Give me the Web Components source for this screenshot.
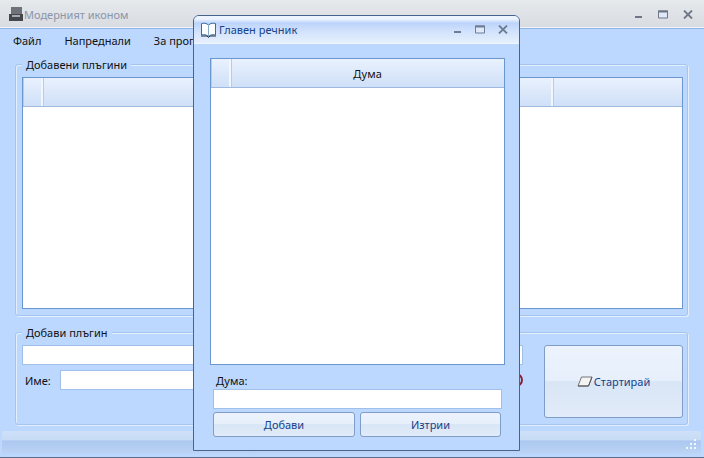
<!DOCTYPE html>
<html><head><meta charset="utf-8"><style>
html,body{margin:0;padding:0;width:704px;height:458px;overflow:hidden;background:#bcd8fe}
body{font:11px "Liberation Sans",Tahoma,sans-serif;color:#111}
</style></head><body>
<main-window></main-window>
<script>
const FONT='"Noto Sans","Liberation Sans",sans-serif';
function def(name,html,init){customElements.define(name,class extends HTMLElement{constructor(){super();this.attachShadow({mode:'open'}).innerHTML=html;}connectedCallback(){if(init)init(this)}})}
const min=c=>`<svg width="9" height="9" viewBox="0 0 9 9"><rect x="1" y="6" width="7" height="2" fill="${c}"/></svg>`;
const max=c=>`<svg width="10" height="9" viewBox="0 0 10 9"><path d="M.5 1h9v7h-9z" fill="#dfe9f8" stroke="${c}"/><rect x="0" y="0.5" width="10" height="2" fill="${c}"/></svg>`;
const cls=c=>`<svg width="10" height="9" viewBox="0 0 10 9"><path d="M1 .5L9 8.5M9 .5L1 8.5" stroke="${c}" stroke-width="1.8" fill="none"/></svg>`;
def('win-controls',`<style>:host{display:flex;align-items:center}span{display:flex}</style><span id="a"></span><span id="b"></span><span id="c"></span>`,el=>{
 const c=el.getAttribute('color'),s=el.shadowRoot;
 s.getElementById('a').innerHTML=min(c);s.getElementById('b').innerHTML=max(c);s.getElementById('c').innerHTML=cls(c);
 const g=el.getAttribute('gaps').split(',');s.getElementById('b').style.marginLeft=g[0]+'px';s.getElementById('c').style.marginLeft=g[1]+'px';
});
def('data-grid',`<style>
:host{display:flex;flex-direction:column;box-sizing:border-box;border:1px solid #6a97cf;background:#fff}
.h{display:flex;background:linear-gradient(#e9f1fd,#cfe0f8);box-sizing:border-box;border-bottom:1px solid #9fb9de;height:var(--hh,29px);font:11px ${FONT};color:#111}
.h ::slotted(*){}
</style><div class="h"><slot></slot></div>`);
def('grid-col',`<style>:host{display:flex;align-items:center;justify-content:center;box-sizing:border-box;border-right:2px solid #f2f7fe;box-shadow:1px 0 0 #b7cceb inset}</style><slot></slot>`);
def('group-box',`<style>
:host{display:block;position:relative;box-sizing:border-box;border:1px solid #a6c5ee;border-radius:3px;box-shadow:inset 1px 1px 0 #e4effe,1px 1px 0 #e4effe}
.l{position:absolute;left:6px;top:-8px;padding:0 4px;background:#bcd8fe;font:11px ${FONT};color:#111;line-height:15px}
</style><div class="l"><slot name="legend"></slot></div><slot></slot>`);
def('text-input',`<style>:host{display:block;box-sizing:border-box;height:20px;background:#fff;border:1px solid #a0c0ea}</style>`);
def('glass-button',`<style>
:host{display:flex;align-items:center;justify-content:center;box-sizing:border-box;border:1px solid #7f9dc6;border-radius:3px;background:linear-gradient(#ecf3fd 0,#e6effb 50%,#d9e6f6 50%,#e1ebf9 100%);font:11px ${FONT};color:#15428b;gap:1px}
</style><slot></slot>`);
def('status-bar',`<style>
:host{display:flex;justify-content:flex-end;align-items:flex-end;box-sizing:border-box;height:23px;padding:0 4px 4px 0;border-radius:2px;background:linear-gradient(#cfe0f8,#c7dbf6 40%,#acc8ef 42%,#bcd4f6)}
</style><svg width="11" height="11" viewBox="0 0 11 11" fill="#f2f7ff"><rect x="8" y="0" width="2" height="2"/><rect x="4" y="4" width="2" height="2"/><rect x="8" y="4" width="2" height="2"/><rect x="0" y="8" width="2" height="2"/><rect x="4" y="8" width="2" height="2"/><rect x="8" y="8" width="2" height="2"/></svg>`);
def('dict-dialog',`<style>
:host{position:absolute;left:193px;top:15px;width:327px;height:436px;box-sizing:border-box;border:1px solid #46648c;border-radius:6px 6px 0 0;background:#bcd8fe;display:flex;flex-direction:column}
.t{height:29px;box-sizing:border-box;display:flex;align-items:center;padding:0 11px 0 6px;border-bottom:1px solid #f0f6ff;border-radius:5px 5px 0 0;background:linear-gradient(#eef4fe 0,#eef4fe 3px,#bdd4fb 7px,#d3e3fc 16px,#e6f0fd 100%);font:11px ${FONT};color:#15428b}
.t span{margin-left:2px;flex:1}
.b{flex:1;display:flex;flex-direction:column;padding:14px 14px 13px 16px}
data-grid{height:307px;--hh:29px}
.lb{font:11px ${FONT};color:#111;margin:8px 0 0 6px;line-height:15px;height:16px}
text-input{margin-left:3px;width:289px}
.r{display:flex;gap:5px;margin:3px 0 0 3px}
glass-button{width:142px;height:25px}
glass-button+glass-button{width:141px}
</style>
<div class="t"><svg width="17" height="16" viewBox="0 0 17 16"><path d="M8.5 3C6.5 1 3.5 1 1.5 1.5V13C3.5 12.5 6.5 12.5 8.5 14.5C10.5 12.5 13.5 12.5 15.500 13V1.500C13.500 1 10.500 1 8.500 3Z" fill="#fbfdff" stroke="#3a6a9f"/><path d="M8.500 3V14.500" stroke="#8aa9c9"/><path d="M1 14h6l1.500 1.500L10 14h6" fill="none" stroke="#24303f"/></svg><span>Главен речник</span><win-controls color="#6c7d95" gaps="13,13"></win-controls></div>
<div class="b"><data-grid><grid-col style="width:20px"></grid-col><grid-col style="flex:1;border-right:0">Дума</grid-col></data-grid>
<div class="lb">Дума:</div><text-input></text-input>
<div class="r"><glass-button>Добави</glass-button><glass-button>Изтрии</glass-button></div></div>`);
def('main-window',`<style>
:host{display:flex;flex-direction:column;position:relative;box-sizing:border-box;width:704px;height:458px;background:#bcd8fe;border-bottom:1px solid #5d6f88;font:11px ${FONT}}
.t{height:29px;flex:none;box-sizing:border-box;display:flex;align-items:center;padding:0 11px 0 9px;background:linear-gradient(#e7eaec 0,#e3e6e9 6px,#d8dbe0 100%);border-bottom:1px solid #8fb5e8;box-shadow:inset 0 -1px 0 #f3f6f9;color:#8b95ab}
.t span{flex:1;margin-left:1px}
.m{height:22px;flex:none;display:flex;align-items:center;gap:23px;padding:0 0 0 13px;color:#111;margin-top:0}
.c{flex:1;display:flex;flex-direction:column;padding:13px 16px 0 15px}
.g1{height:252px;padding:12px 4px 6px 6px;display:flex}
.g1 data-grid{flex:1;--hh:29px}
.g2{height:93px;margin-top:16px;padding:12px 4px 6px 6px;display:grid;grid-template-columns:1fr 139px;column-gap:21px}
.f{display:flex;flex-direction:column;gap:5px}
.row{display:flex;align-items:center}
.row label{width:38px;padding-left:3px;box-sizing:border-box;color:#111}
.row text-input{flex:1}
.btn{height:73px;display:flex;margin-top:0}
.btn glass-button{flex:1}
.dot{width:14px;height:14px;border:2px solid #8a1f3a;border-radius:50%;box-sizing:border-box;margin-left:6px;flex:none}
status-bar{margin:6px 3px 4px 2px;flex:none}
</style>
<div class="t"><svg width="14" height="16" viewBox="0 0 14 16"><rect x="2" y="1" width="11" height="7" fill="#6f7278"/><rect x="0" y="8" width="14" height="7" fill="#45474c"/><rect x="3" y="9" width="8" height="2" fill="#a9abae"/></svg><span>Модерният иконом</span><win-controls color="#6c7686" gaps="15,15"></win-controls></div>
<nav class="m"><span>Файл</span><span>Напреднали</span><span>За програмата</span></nav>
<div class="c">
<group-box class="g1"><span slot="legend">Добавени плъгини</span><data-grid><grid-col style="width:20px"></grid-col><grid-col style="flex:1"></grid-col><grid-col style="width:129px;border-right:0"></grid-col></data-grid></group-box>
<group-box class="g2"><span slot="legend">Добави плъгин</span>
<div class="f"><text-input></text-input><div class="row"><label>Име:</label><text-input></text-input><i class="dot"></i></div></div>
<div class="btn"><glass-button><svg width="16" height="11" viewBox="0 0 16 11"><path d="M4.500 1H15L11.500 10H1Z" fill="#f4f4f2" stroke="#777"/><path d="M1 10H11.500L15 1" fill="none" stroke="#555"/></svg>Стартирай</glass-button></div>
</group-box></div>
<status-bar></status-bar>
<dict-dialog></dict-dialog>`);
</script></body></html>
